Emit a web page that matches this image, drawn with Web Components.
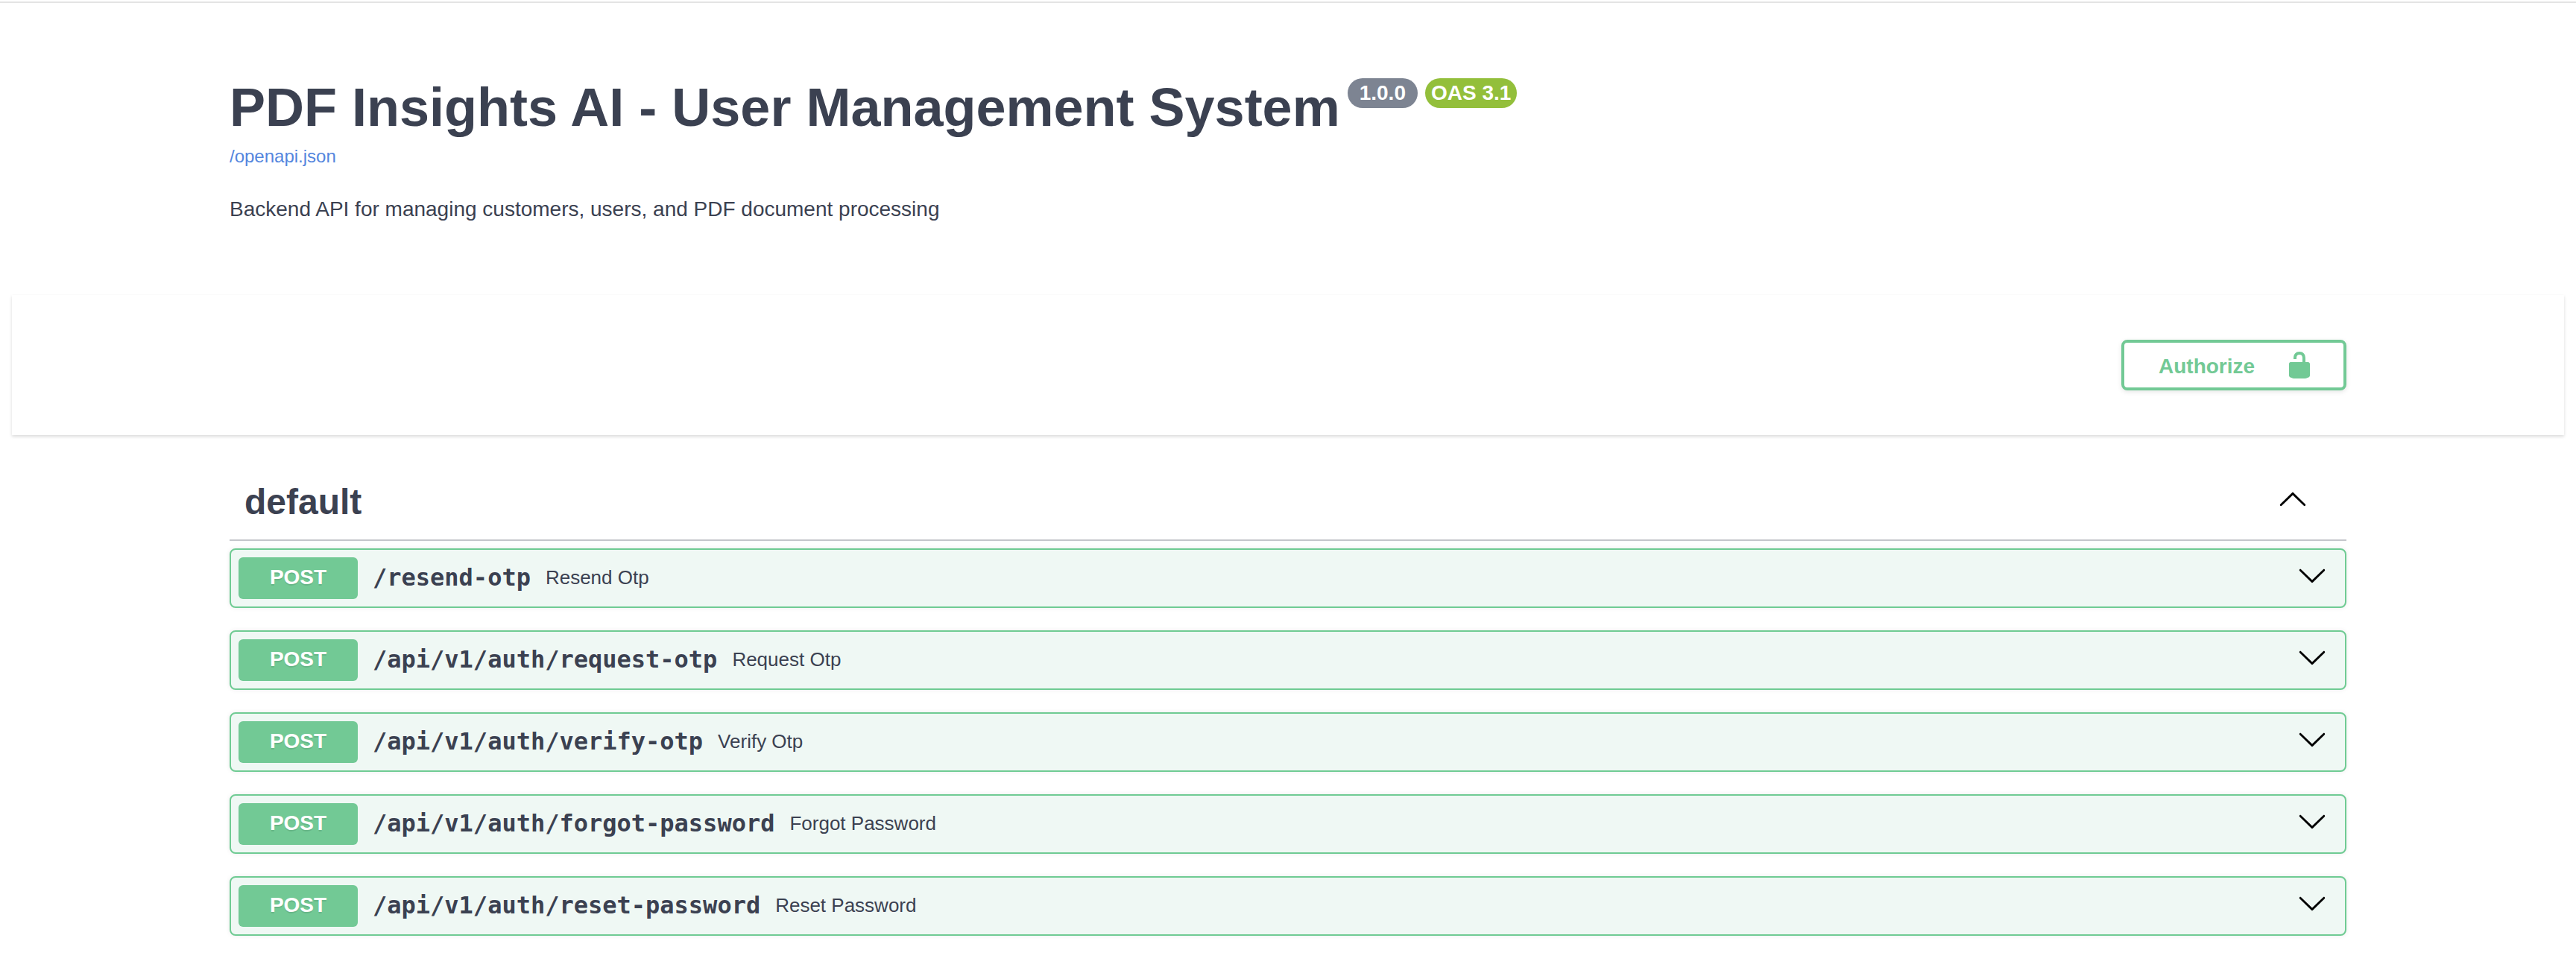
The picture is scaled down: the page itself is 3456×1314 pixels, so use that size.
<!DOCTYPE html>
<html lang="en"><head><meta charset="utf-8"><title>PDF Insights AI</title>
<style>
html,body{margin:0;padding:0;background:#fff}
body{font-family:"Liberation Sans",Arial,sans-serif;color:#3b4151;min-height:1314px}
</style></head>
<body>
<swagger-page>
  <api-info slot="info" url="/openapi.json" version="1.0.0" oas="OAS 3.1">
    <span slot="title">PDF Insights AI - User Management System</span>
    <span slot="desc">Backend API for managing customers, users, and PDF document processing</span>
  </api-info>
  <scheme-bar slot="bar"><auth-button>Authorize</auth-button></scheme-bar>
  <tag-section slot="main" name="default">
    <op-block path="/resend-otp" summary="Resend Otp"></op-block>
    <op-block path="/api/v1/auth/request-otp" summary="Request Otp"></op-block>
    <op-block path="/api/v1/auth/verify-otp" summary="Verify Otp"></op-block>
    <op-block path="/api/v1/auth/forgot-password" summary="Forgot Password"></op-block>
    <op-block path="/api/v1/auth/reset-password" summary="Reset Password"></op-block>
  </tag-section>
</swagger-page>
<script>
const DOWN='M17.418 6.109c.272-.268.709-.268.979 0s.271.701 0 .969l-7.908 7.83c-.27.268-.707.268-.979 0l-7.908-7.83c-.27-.268-.27-.701 0-.969.271-.268.709-.268.979 0L10 13.25l7.418-7.141z';
const UP='M17.418 14.908c.272.27.709.27.979 0s.271-.701 0-.971l-7.908-7.83c-.27-.268-.707-.268-.979 0l-7.908 7.83c-.27.27-.27.701 0 .971.271.27.709.27.979 0L10 7.75l7.418 7.158z';
function shadow(el,html){el.attachShadow({mode:'open'}).innerHTML=html}
customElements.define('swagger-page',class extends HTMLElement{constructor(){super();shadow(this,`
<style>
:host{display:block}
.top{height:2px;margin-top:2px;background:#e4e4e4}
.wrap{width:2840px;margin:0 auto}
.bar{margin:0 16px}
</style>
<div class="top"></div>
<div class="wrap"><slot name="info"></slot></div>
<div class="bar"><slot name="bar"></slot></div>
<div class="wrap"><slot name="main"></slot></div>`)}});
customElements.define('api-info',class extends HTMLElement{constructor(){super();shadow(this,`
<style>
:host{display:block;height:392px;box-sizing:border-box;padding-top:95px}
.head{display:flex;align-items:flex-start;height:69px}
h2{margin:0;font:700 72px/60px "Liberation Sans",Arial,sans-serif;color:#3b4151;white-space:nowrap;padding-top:15px}
.b{margin:6px 0 0 10px;height:40px;box-sizing:border-box;padding:0 16px;border-radius:114px;font:700 28px/40px "Liberation Sans",Arial,sans-serif;color:#fff;background:#7d8492;white-space:nowrap}
.b.o{background:#93bf3b;padding:0 8px}
a{display:block;margin-top:28px;font:400 24px/28px "Liberation Sans",Arial,sans-serif;color:#5486de;text-decoration:none}
p{margin:39px 0 0;font:400 28px/36px "Liberation Sans",Arial,sans-serif;color:#3b4151}
</style>
<div class="head"><h2><slot name="title"></slot></h2><span class="b">${this.getAttribute('version')}</span><span class="b o">${this.getAttribute('oas')}</span></div>
<a href="#">${this.getAttribute('url')}</a>
<p><slot name="desc"></slot></p>`)}});
customElements.define('scheme-bar',class extends HTMLElement{constructor(){super();shadow(this,`
<style>
:host{display:flex;justify-content:flex-end;align-items:center;height:188px;background:#fff;box-shadow:0 2px 4px 0 rgba(0,0,0,.15);padding:0 292px 0 0;box-sizing:border-box}
</style><slot></slot>`)}});
customElements.define('auth-button',class extends HTMLElement{constructor(){super();shadow(this,`
<style>
:host{display:flex;align-items:center;box-sizing:border-box;width:302px;height:68px;border:4px solid #72c995;border-radius:8px;padding:0 0 0 46px;box-shadow:0 2px 6px rgba(0,0,0,.1);color:#72c995;font:700 28px/36px "Liberation Sans",Arial,sans-serif;background:#fff}
.t{padding-top:3px}
svg{display:block;margin-left:40px;width:40px;height:40px;fill:#72c995}
</style>
<span class="t"><slot></slot></span>
<svg viewBox="0 0 20 20"><path d="M15.8 8H14V5.6C14 2.703 12.665 1 10 1 7.334 1 6 2.703 6 5.6V6h2v-.801C8 3.754 8.797 3 10 3c1.203 0 2 .754 2 2.199V8H4c-.553 0-1 .646-1 1.199V17c0 .549.428 1.139.951 1.307l1.197.387C5.672 18.861 6.55 19 7.1 19h5.8c.549 0 1.428-.139 1.951-.307l1.196-.387c.524-.167.953-.757.953-1.306V9.199C17 8.646 16.352 8 15.8 8z"/></svg>`)}});
customElements.define('tag-section',class extends HTMLElement{constructor(){super();shadow(this,`
<style>
:host{display:block}
.h{display:flex;align-items:center;justify-content:space-between;height:114px;margin-top:26px;border-bottom:2px solid #c4c6cb;padding:0 52px 0 20px;box-sizing:content-box;margin-bottom:10px}
h3{margin:14px 0 0;font:700 48px/60px "Liberation Sans",Arial,sans-serif;color:#3b4151}
svg{display:block;width:40px;height:40px;margin-top:4px}
</style>
<div class="h"><h3>${this.getAttribute('name')}</h3><svg viewBox="0 0 20 20"><path d="${UP}"/></svg></div>
<slot></slot>`)}});
customElements.define('op-block',class extends HTMLElement{constructor(){super();shadow(this,`
<style>
:host{display:flex;align-items:center;box-sizing:border-box;height:80px;margin-bottom:30px;border:2px solid #6fcb93;border-radius:8px;background:#eff8f4;padding:0 24px 0 10px;box-shadow:0 0 6px rgba(0,0,0,.08)}
.m{flex:none;width:160px;height:56px;border-radius:6px;background:#72c995;color:#fff;text-align:center;font:700 28px/54px "Liberation Sans",Arial,sans-serif;text-shadow:0 2px 0 rgba(0,0,0,.1)}
.p{padding:0 20px 2px;font:700 32px/40px "DejaVu Sans Mono",monospace;color:#3b4151;white-space:nowrap}
.s{flex:1;padding-bottom:2px;font:400 26px/36px "Liberation Sans",Arial,sans-serif;color:#3b4151;white-space:nowrap}
svg{display:block;flex:none;width:40px;height:40px;margin-top:-8px}
</style>
<span class="m">POST</span><span class="p">${this.getAttribute('path')}</span><span class="s">${this.getAttribute('summary')}</span>
<svg viewBox="0 0 20 20"><path d="${DOWN}"/></svg>`)}});
</script>
</body></html>
